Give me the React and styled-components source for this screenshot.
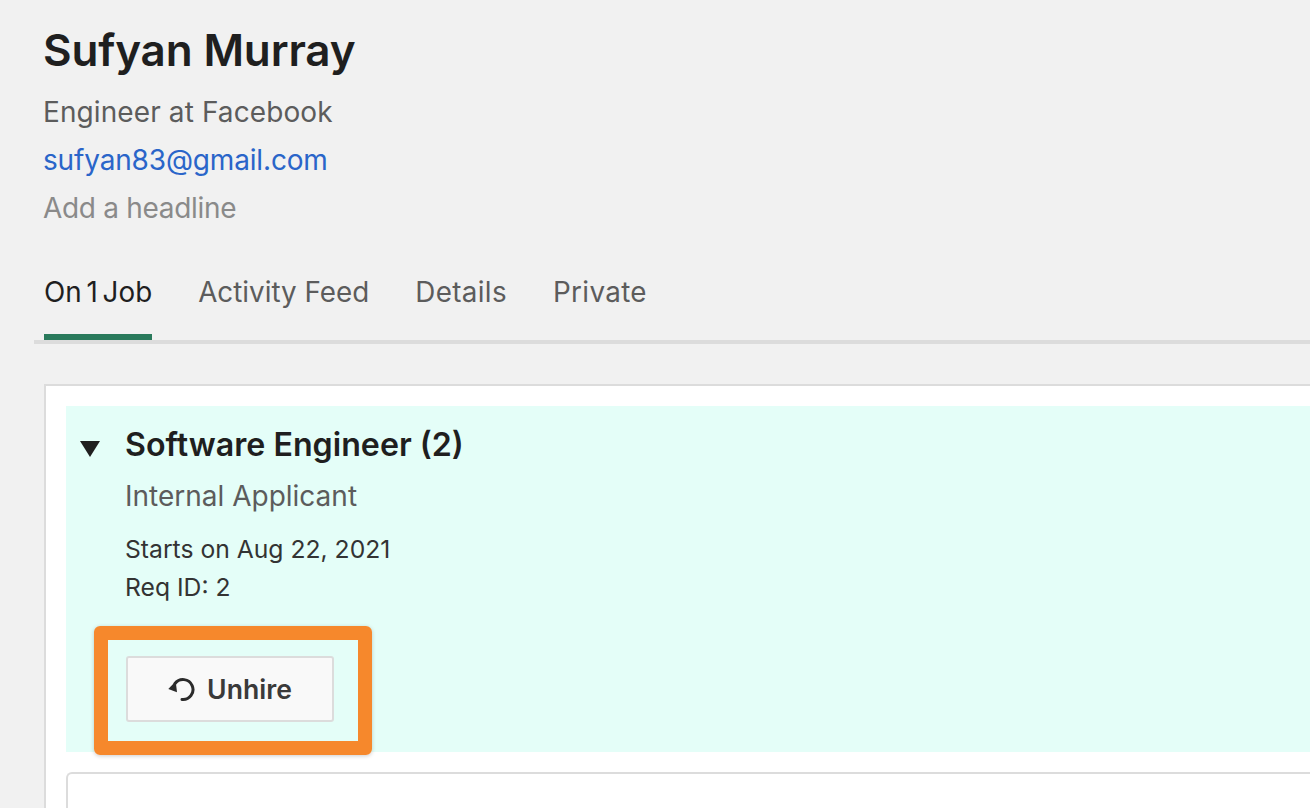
import React from "react";
import styled, { createGlobalStyle } from "styled-components";

const GlobalStyle = createGlobalStyle`
  html, body {
    margin: 0;
    padding: 0;
    height: 808px;
    overflow: hidden;
    background: #f1f1f1;
    font-family: Inter, "Liberation Sans", sans-serif;
  }
`;

const tabs = [
  { label: "On 1 Job", active: true },
  { label: "Activity Feed" },
  { label: "Details", spacing: "0.35px" },
  { label: "Private", spacing: "0.35px" },
];

export default function App() {
  return (
    <Page>
      <GlobalStyle />
      <Profile>
        <Name>Sufyan Murray</Name>
        <Line $spacing="0.1px">Engineer at Facebook</Line>
        <Line $color="#2a65c9" $spacing="-0.16px">sufyan83@gmail.com</Line>
        <Line $color="#8a8a8a" $spacing="-0.3px">Add a headline</Line>
      </Profile>
      <TabBar>
        {tabs.map((tab) => (
          <Tab key={tab.label} $active={tab.active} $spacing={tab.spacing}>
            {tab.label}
          </Tab>
        ))}
      </TabBar>
      <Card>
        <JobPanel>
          <JobHeader>
            <Caret viewBox="0 0 20 16">
              <path d="M0 0h20L10 16z" fill="#1f1f1f" />
            </Caret>
            <JobTitle>Software Engineer (2)</JobTitle>
          </JobHeader>
          <JobBody>
            <Source>Internal Applicant</Source>
            <Meta>Starts on Aug 22, 2021</Meta>
            <Meta>Req ID: 2</Meta>
            <Highlighted>
              <UnhireButton>
                <svg width="27" height="25" viewBox="0 0 27 25" fill="none">
                  <path
                    d="M7 6.5A10 10 0 1 1 14 22.5"
                    stroke="#2b2b2b"
                    strokeWidth="3"
                    strokeLinecap="round"
                  />
                  <path d="M0.3 12L7.7 4.3L9 15.3z" fill="#2b2b2b" />
                </svg>
                Unhire
              </UnhireButton>
              <Frame />
            </Highlighted>
          </JobBody>
        </JobPanel>
        <NextPanel />
      </Card>
    </Page>
  );
}

const Page = styled.div`
  width: 1310px;
  height: 808px;
  overflow: hidden;
  box-sizing: border-box;
  padding-top: 22px;
`;

const Profile = styled.div`
  padding-left: 43px;
  display: flex;
  flex-direction: column;
`;

const Name = styled.h1`
  margin: 0 0 10px;
  font-size: 44px;
  line-height: 56px;
  font-weight: 600;
  letter-spacing: -0.15px;
  color: #1f1f1f;
`;

const Line = styled.div`
  font-size: 28px;
  line-height: 48px;
  letter-spacing: ${(p) => p.$spacing || "0"};
  color: ${(p) => p.$color || "#5c5c5c"};
`;

const TabBar = styled.div`
  margin: 33px 0 0 34px;
  padding-left: 10px;
  display: flex;
  gap: 46px;
  border-bottom: 4px solid #dcdcdc;
  height: 75px;
`;

const Tab = styled.div`
  height: 75px;
  box-sizing: border-box;
  font-size: 27.8px;
  line-height: 54px;
  letter-spacing: ${(p) => p.$spacing || "0"};
  word-spacing: ${(p) => (p.$active ? "-3px" : "0")};
  color: ${(p) => (p.$active ? "#1f1f1f" : "#5c5c5c")};
  border-bottom: ${(p) => (p.$active ? "6px solid #2a7a5c" : "none")};
`;

const Card = styled.div`
  margin: 40px 0 0 44px;
  box-sizing: border-box;
  border: 2px solid #dcdcdc;
  border-right: none;
  background: #fff;
  padding: 20px 0 0 20px;
  height: 500px;
`;

const JobPanel = styled.div`
  background: #e4fef8;
  height: 346px;
  box-sizing: border-box;
  padding-top: 20px;
`;

const JobHeader = styled.div`
  display: flex;
  align-items: center;
  height: 38px;
`;

const Caret = styled.svg`
  width: 20px;
  height: 16px;
  margin: 8px 25px 0 14px;
`;

const JobTitle = styled.h2`
  margin: 0;
  font-size: 32.2px;
  line-height: 38px;
  font-weight: 600;
  color: #1f1f1f;
`;

const JobBody = styled.div`
  padding-left: 59px;
`;

const Source = styled.div`
  margin: 14px 0 16px;
  font-size: 28px;
  line-height: 36px;
  color: #5c5c5c;
`;

const Meta = styled.div`
  font-size: 24.7px;
  line-height: 38px;
  color: #333;
`;

const Highlighted = styled.div`
  position: relative;
  width: 208px;
  margin: 50px 0 0 1px;
`;

const UnhireButton = styled.button`
  width: 208px;
  height: 66px;
  box-sizing: border-box;
  display: flex;
  align-items: center;
  justify-content: center;
  gap: 12px;
  padding: 0;
  background: #f9f9f9;
  border: 2px solid #dcdcdc;
  border-radius: 3px;
  font-family: inherit;
  font-size: 26.6px;
  font-weight: 600;
  color: #3a3a3a;
`;

const Frame = styled.div`
  position: absolute;
  left: -32px;
  top: -30px;
  width: 278px;
  height: 129px;
  box-sizing: border-box;
  border: 14px solid #f6882c;
  border-radius: 6px;
  box-shadow: 0 1px 4px rgba(0, 0, 0, 0.2);
`;

const NextPanel = styled.div`
  margin-top: 20px;
  height: 100px;
  background: #fff;
  border: 2px solid #dcdcdc;
  border-right: none;
  border-radius: 6px 0 0 0;
`;
